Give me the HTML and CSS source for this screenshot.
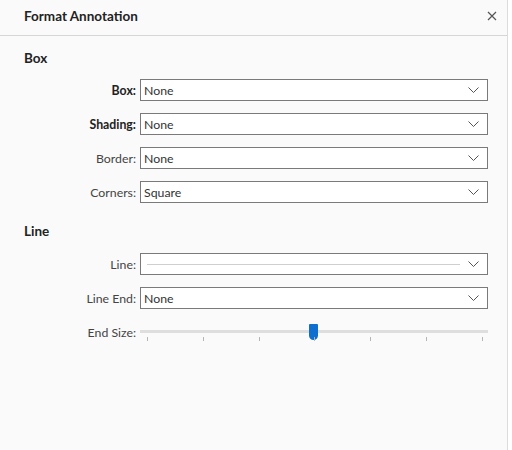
FILE: index.html
```html
<!DOCTYPE html>
<html>
<head>
<meta charset="utf-8">
<link rel="stylesheet" href="styles.css">
</head>
<body>
<div class="panel">
  <div class="header">
    <span class="title">Format Annotation</span>
    <span class="close"><svg width="10" height="10" viewBox="0 0 10 10"><path d="M1 1L9 9M9 1L1 9" stroke="#555" stroke-width="1.2" fill="none"/></svg></span>
  </div>
  <div class="section first">
    <div class="heading">Box</div>
    <div class="grid">
      <label class="lbl bold">Box:</label>
      <div class="select"><span>None</span><svg class="chev" width="11" height="7" viewBox="0 0 11 7"><path d="M0.5 0.5L5.5 5.5L10.5 0.5" stroke="#555" stroke-width="1" fill="none"/></svg></div>
      <label class="lbl bold">Shading:</label>
      <div class="select"><span>None</span><svg class="chev" width="11" height="7" viewBox="0 0 11 7"><path d="M0.5 0.5L5.5 5.5L10.5 0.5" stroke="#555" stroke-width="1" fill="none"/></svg></div>
      <label class="lbl">Border:</label>
      <div class="select"><span>None</span><svg class="chev" width="11" height="7" viewBox="0 0 11 7"><path d="M0.5 0.5L5.5 5.5L10.5 0.5" stroke="#555" stroke-width="1" fill="none"/></svg></div>
      <label class="lbl">Corners:</label>
      <div class="select"><span>Square</span><svg class="chev" width="11" height="7" viewBox="0 0 11 7"><path d="M0.5 0.5L5.5 5.5L10.5 0.5" stroke="#555" stroke-width="1" fill="none"/></svg></div>
    </div>
  </div>
  <div class="section second">
    <div class="heading">Line</div>
    <div class="grid">
      <label class="lbl">Line:</label>
      <div class="select"><span class="linesample"></span><svg class="chev" width="11" height="7" viewBox="0 0 11 7"><path d="M0.5 0.5L5.5 5.5L10.5 0.5" stroke="#555" stroke-width="1" fill="none"/></svg></div>
      <label class="lbl">Line End:</label>
      <div class="select"><span>None</span><svg class="chev" width="11" height="7" viewBox="0 0 11 7"><path d="M0.5 0.5L5.5 5.5L10.5 0.5" stroke="#555" stroke-width="1" fill="none"/></svg></div>
      <label class="lbl">End Size:</label>
      <div class="slider">
        <div class="track"></div>
        <div class="thumb"></div>
        <div class="ticks">
          <i></i><i></i><i></i><i></i><i></i><i></i><i></i>
        </div>
      </div>
    </div>
  </div>
</div>
</body>
</html>
```
FILE: styles.css
```css
html, body {
  margin: 0;
  padding: 0;
  background: #ffffff;
}
body {
  font-family: "Lato", "Open Sans", sans-serif;
  color: #333;
}
.panel {
  width: 507px;
  height: 450px;
  background: #fafafa;
  border-right: 1px solid #dcdcdc;
}
.header {
  height: 36px;
  border-bottom: 1px solid #d6d6d6;
  display: flex;
  align-items: center;
  justify-content: space-between;
  padding: 0 10px 0 24px;
  box-sizing: border-box;
}
.title {
  font-size: 13.5px;
  font-weight: 700;
  color: #222;
  margin-top: -3px;
}
.close {
  display: flex;
  margin-top: -3px;
}
.section {
  padding-left: 24px;
}
.section.first {
  padding-top: 14px;
}
.section.second {
  padding-top: 20px;
}
.heading {
  font-size: 13.5px;
  font-weight: 700;
  color: #222;
  line-height: 16px;
}
.grid {
  display: grid;
  grid-template-columns: 112px 348px;
  column-gap: 4px;
  row-gap: 12px;
  margin-top: 13px;
}
.section.second .grid {
  margin-top: 14px;
}
.lbl {
  font-size: 12.3px;
  color: #444;
  text-align: right;
  align-self: center;
  white-space: nowrap;
}
.lbl.bold {
  font-weight: 700;
  color: #222;
}
.select {
  height: 22px;
  box-sizing: border-box;
  border: 1px solid #7a7a7a;
  background: #fff;
  display: flex;
  align-items: center;
  padding: 0 4px 0 3px;
  font-size: 12.3px;
  color: #333;
}
.select span {
  flex: 1;
}
.select .chev {
  margin-right: 4px;
}
.linesample {
  height: 1px;
  background: #cfcfcf;
  margin: 0 8px 0 3px;
}
.slider {
  position: relative;
  height: 22px;
}
.track {
  position: absolute;
  left: 0;
  right: 0;
  top: 9px;
  height: 3px;
  background: #dedede;
}
.thumb {
  position: absolute;
  left: 169px;
  top: 3px;
  width: 9px;
  height: 16px;
  background: #0f6fd0;
  border-radius: 1px 1px 5px 5px;
}
.ticks {
  position: absolute;
  left: 7px;
  right: 5px;
  top: 16px;
  display: flex;
  justify-content: space-between;
}
.ticks i {
  display: block;
  width: 1px;
  height: 4px;
  background: #b5b5b5;
}
```
